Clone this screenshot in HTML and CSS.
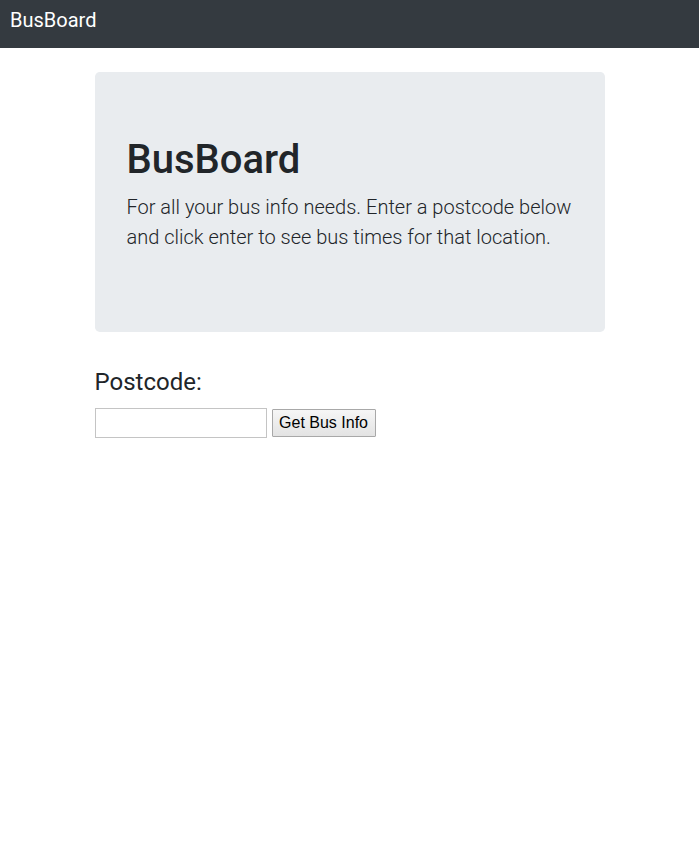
FILE: index.html
```html
<!DOCTYPE html>
<html lang="en">
<head>
<meta charset="utf-8">
<title>BusBoard</title>
<link rel="stylesheet" href="styles.css">
</head>
<body>
<nav class="navbar">
  <span class="brand">BusBoard</span>
</nav>
<main class="container">
  <section class="jumbotron">
    <h1 class="title">BusBoard</h1>
    <p class="lead">For all your bus info needs. Enter a postcode below and click enter to see bus times for that location.</p>
  </section>
  <form class="search">
    <label class="label" for="postcode">Postcode:</label>
    <div class="row">
      <input class="input" id="postcode" type="text">
      <button class="btn" type="button">Get Bus Info</button>
    </div>
  </form>
</main>
</body>
</html>
```
FILE: styles.css
```css
* { box-sizing: border-box; }
body {
  margin: 0;
  font-family: Roboto, "Liberation Sans", sans-serif;
  color: #212529;
  background: #fff;
  font-size: 16px;
  line-height: 1.5;
}
.navbar {
  background: #343a40;
  height: 48px;
  display: flex;
  align-items: center;
  padding: 0 10px;
}
.brand {
  color: #fff;
  font-size: 20px;
  line-height: 30px;
  margin-top: -8px;
}
.container {
  width: 540px;
  margin: 0 auto;
  padding: 0 15px;
}
.jumbotron {
  margin-top: 24px;
  margin-bottom: 32px;
  background: #e9ecef;
  border-radius: 4.8px;
  padding: 64px 32px;
}
.title {
  margin: 0 0 8px;
  font-size: 40px;
  font-weight: 500;
  line-height: 1.2;
}
.lead {
  margin: 0 0 16px;
  font-size: 20px;
  font-weight: 300;
  line-height: 30px;
}
.label {
  display: block;
  font-size: 24px;
  line-height: 36px;
  margin-bottom: 8px;
}
.row {
  display: flex;
  align-items: center;
  gap: 5px;
}
.input {
  width: 172px;
  height: 30px;
  border: 1px solid #c4c4c4;
  background: #fff;
  margin: 0;
}
.btn {
  width: 104px;
  height: 28px;
  border: 1px solid #a8a8a8;
  border-radius: 1px;
  background: linear-gradient(#f6f6f6, #e3e3e3);
  font-family: "Liberation Sans", Arial, sans-serif;
  font-size: 16px;
  color: #000;
  padding: 0;
}
```
